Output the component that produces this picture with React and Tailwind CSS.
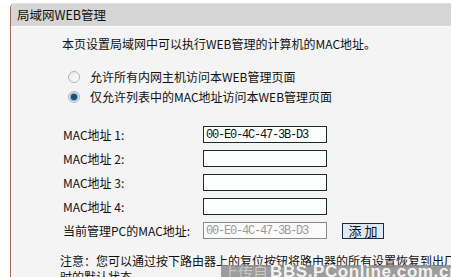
import React from 'react'

const FONT = { fontFamily: '"SimSun", "Noto Sans CJK SC", sans-serif' }

const MAC_ROWS = [
  { label: 'MAC地址 1:', value: '00-E0-4C-47-3B-D3' },
  { label: 'MAC地址 2:', value: '' },
  { label: 'MAC地址 3:', value: '' },
  { label: 'MAC地址 4:', value: '' },
]

function Radio({ checked }) {
  return (
    <span className="w-[12px] h-[12px] rounded-full border border-[#b4b4b4] bg-gradient-to-br from-[#e6e6e6] to-[#ffffff] flex items-center justify-center shrink-0">
      {checked && <span className="w-[6px] h-[6px] rounded-full bg-[#1d4d6e] shadow-[0_0_1px_1px_#5aa0c8]" />}
    </span>
  )
}

function MacText({ children, muted }) {
  return (
    <span className={`font-['Liberation_Mono',monospace] text-[12px] tracking-[-1.2px] ${muted ? 'text-[#9a9a9a]' : 'text-[#111]'}`}>
      {children}
    </span>
  )
}

export default function App() {
  return (
    <div className="w-[451px] h-[277px] bg-white overflow-hidden relative text-[12px] text-[#111]" style={FONT}>
      <div className="pl-[10px] pt-[3px] h-full">
        <div className="h-full border-l border-[#9c6a5c] rounded-tl-[5px] bg-[#f4f4f4] flex flex-col">
          {/* Header */}
          <div className="h-[23px] shrink-0 bg-[#d5d5d5] rounded-tl-[5px] border-t border-[#e4e4e4] flex items-center pl-[6px] text-[12.5px] leading-none">
            局域网WEB管理
          </div>
          <div className="h-px shrink-0 bg-[#fbfbfb]" />

          {/* Body */}
          <div className="shrink-0 pl-[51px] pt-[9px] flex flex-col">
            <div className="h-[16px] leading-[16px]">本页设置局域网中可以执行WEB管理的计算机的MAC地址。</div>

            <div className="mt-[15px] pl-[6px] flex flex-col">
              <div className="h-[20px] flex items-center gap-[10px]">
                <Radio />
                <span>允许所有内网主机访问本WEB管理页面</span>
              </div>
              <div className="h-[20px] flex items-center gap-[10px]">
                <Radio checked />
                <span>仅允许列表中的MAC地址访问本WEB管理页面</span>
              </div>
            </div>

            <div className="mt-[19px] flex flex-col gap-[7px]">
              {MAC_ROWS.map(r => (
                <div key={r.label} className="h-[17px] flex items-center">
                  <span className="w-[141px] pl-[1px]">{r.label}</span>
                  <div className="w-[124px] h-[17px] border border-[#1e2b2b] bg-[#fcfffe] flex items-center pl-[2px]">
                    <MacText>{r.value}</MacText>
                  </div>
                </div>
              ))}
              <div className="h-[17px] flex items-center">
                <span className="w-[141px] pl-[1px]">当前管理PC的MAC地址:</span>
                <div className="w-[124px] h-[17px] border border-[#8a8a8a] bg-[#fbfbfb] flex items-center pl-[2px]">
                  <MacText muted>00-E0-4C-47-3B-D3</MacText>
                </div>
                <button className="ml-[15px] w-[42px] h-[16px] border border-[#1e2b3a] bg-[#dde9f5] flex items-center justify-center text-[13px] leading-none">
                  添 加
                </button>
              </div>
            </div>

            <div className="mt-[14px] -ml-[2px] leading-[16px] whitespace-nowrap">
              注意：您可以通过按下路由器上的复位按钮将路由器的所有设置恢复到出厂
            </div>
            <div className="-ml-[2px] leading-[16px] whitespace-nowrap">时的默认状态。</div>
          </div>
        </div>
      </div>

      {/* Watermark overlay */}
      <div className="absolute left-[221px] top-[265px] w-[230px] h-[12px] bg-[#8c8c8c]/85 flex items-center overflow-hidden whitespace-nowrap">
        <span className="text-[15px] text-[#c8c8c8] leading-none ml-[2px]">上传自</span>
        <span className="font-['Liberation_Sans',sans-serif] font-bold text-[17px] text-[#f2f2f2] leading-none tracking-[0.6px] ml-[2px]">BBS.PConline.com.cn</span>
      </div>
    </div>
  )
}
